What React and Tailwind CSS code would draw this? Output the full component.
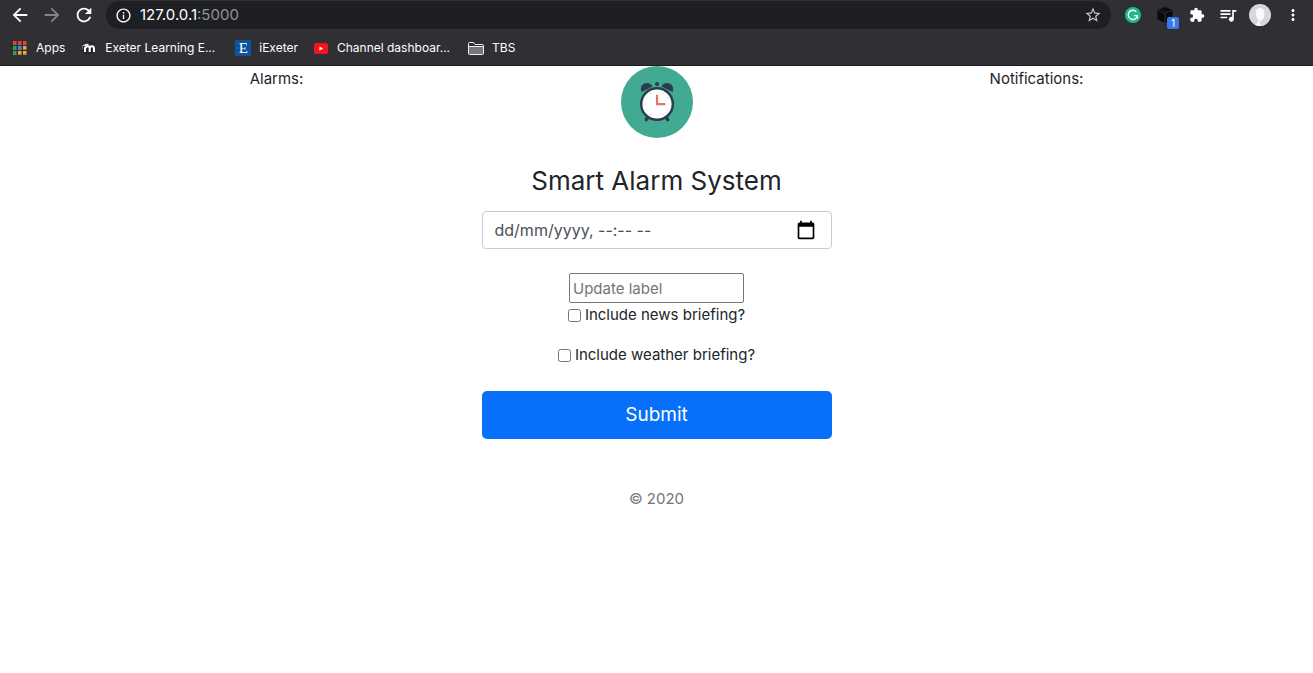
import React from "react";
import {
  MdArrowBack,
  MdArrowForward,
  MdRefresh,
  MdInfoOutline,
  MdStarOutline,
  MdExtension,
  MdQueueMusic,
  MdMoreVert,
} from "react-icons/md";

const APP_DOTS = [
  "#f03e36", "#f03e36", "#f03e36",
  "#2f9e55", "#3b8bea", "#f5a623",
  "#2f9e55", "#f5a623", "#f5a623",
];

function AppsIcon() {
  return (
    <svg viewBox="0 0 14 14" className="size-[14px]" aria-hidden="true">
      {APP_DOTS.map((c, i) => (
        <g key={i}>
          <rect x={(i % 3) * 5} y={Math.floor(i / 3) * 5} width="3.5" height="3.5" fill={c} />
          <rect x={(i % 3) * 5} y={Math.floor(i / 3) * 5 + 3} width="3.5" height="1" fill="#8b8b8e" opacity=".6" />
        </g>
      ))}
    </svg>
  );
}

function MoodleIcon() {
  return (
    <svg viewBox="0 0 16 16" className="size-4" fill="none" aria-hidden="true">
      <circle cx="7.5" cy="8" r="7" fill="#27272a" />
      <path d="M4 12V7.2M8.7 12V8.6Q8.7 6.2 6.8 6.2T4.6 8M8.7 8.6Q8.9 6.2 10.9 6.2T13 8.6V12" stroke="#fff" strokeWidth="2" />
      <path d="M1.2 5.6 6 3.4 8.4 4.8 4.2 6.2z" fill="#e8e8e8" />
      <path d="M1.5 5.8v3" stroke="#aaa" strokeWidth=".6" />
    </svg>
  );
}

function YouTubeIcon() {
  return (
    <svg viewBox="0 0 14 11" className="w-[14px] h-[11px]" aria-hidden="true">
      <rect width="14" height="11" rx="2.6" fill="#f8131b" />
      <path d="M5.4 3.4v4.2L9.2 5.5z" fill="#fff" />
    </svg>
  );
}

function FolderIcon() {
  return (
    <svg viewBox="0 0 16 13" className="w-4 h-[13px]" aria-hidden="true">
      <path d="M.5 1.5Q.5.5 1.5.5H5.6L7 2.5H14.5Q15.5 2.5 15.5 3.5V11.5Q15.5 12.5 14.5 12.5H1.5Q.5 12.5.5 11.5z" fill="#302f34" stroke="#f1f1f1" />
      <path d="M1 5H15V12H1z" fill="#77777a" />
      <path d="M.5 4.5H15.5" stroke="#f1f1f1" />
    </svg>
  );
}

function GrammarlyIcon() {
  return (
    <svg viewBox="0 0 16 16" className="size-4" fill="none" aria-hidden="true">
      <circle cx="8" cy="8" r="8" fill="#1fb892" />
      <path d="M11.3 4.8A4.6 4.6 0 1 0 12.4 8.6H9.2M12.4 8.6V11.4" stroke="#fff" strokeWidth="1.3" />
    </svg>
  );
}

function CubeIcon() {
  return (
    <svg viewBox="0 0 16 16" className="size-4" aria-hidden="true">
      <path d="M8 0 15.5 3V12.5L8 16 .5 12.5V3z" fill="#09090a" />
      <path d="M.8 3.3 8 6.3l7.2-3M8 6.3V15.6" fill="none" stroke="#39393d" strokeWidth=".8" />
      <path d="M4.2 2 11 5" stroke="#2c2c2f" strokeWidth=".6" />
    </svg>
  );
}

function AvatarIcon() {
  return (
    <svg viewBox="0 0 22 22" className="size-[22px]" aria-hidden="true">
      <circle cx="11" cy="11" r="11" fill="#d8d7d7" />
      <path d="M11 4C7.8 4 6.6 6.7 6.8 10c.1 3 1.4 5 2.6 6L9 18.6 6 21Q11 23 15.4 21L13 18.8V16c1.4-1 2.4-3.2 2.5-6C15.6 6.7 14.2 4 11 4z" fill="#f8fbfd" />
      <path d="M13 16v2.8L15 20.7 11.5 21.8 10.8 17.5z" fill="#c9dbe4" />
    </svg>
  );
}

function CalendarIcon() {
  return (
    <svg viewBox="0 0 24 24" className="size-5" aria-hidden="true">
      <path d="M20 3h-1V1h-2v2H7V1H5v2H4c-1.1 0-2 .9-2 2v16c0 1.1.9 2 2 2h16c1.1 0 2-.9 2-2V5c0-1.1-.9-2-2-2zm0 18H4V8h16v13z" fill="#000" />
    </svg>
  );
}

function AlarmLogo() {
  const ticks = Array.from({ length: 12 }, (_, i) => i * 30);
  return (
    <svg viewBox="0 0 72 72" className="size-[72px]" role="img" aria-label="Alarm clock">
      <circle cx="36" cy="36" r="36" fill="#42aa92" />
      <path d="M28 50 25.3 53.5M44 50l2.7 3.5" stroke="#2b3d4d" strokeWidth="3.6" strokeLinecap="round" />
      <g fill="#2b3d4d">
        <path d="M20.5 26C18.5 21 21.5 17 26 17c2.6 0 4.6 1.4 5.5 3.4z" />
        <path d="M51.5 26C53.5 21 50.5 17 46 17c-2.6 0-4.6 1.4-5.5 3.4z" />
        <circle cx="36" cy="18" r="2" />
      </g>
      <circle cx="36" cy="38" r="15.8" fill="#fff" stroke="#2b3d4d" strokeWidth="2.4" />
      {ticks.map((a) => (
        <path key={a} d="M36 25.5v1" stroke="#a8b0b6" strokeWidth=".7" transform={`rotate(${a} 36 38)`} />
      ))}
      <path d="M36 29.5V38.2H43.5" fill="none" stroke="#e57560" strokeWidth="2.2" strokeLinecap="round" />
    </svg>
  );
}

function Bookmark({ icon, children, className }) {
  return (
    <a href="#" className={`flex items-center whitespace-nowrap ${className}`}>
      {icon}
      {children}
    </a>
  );
}

function BrowserBar() {
  return (
    <header className="bg-[#302f34] border-b border-[#1c1b1f] text-white">
      <div className="flex items-center h-[30px] pl-[9px] pr-[11px]">
        <button type="button" aria-label="Back" className="mr-[10px]"><MdArrowBack className="size-[22px]" /></button>
        <button type="button" aria-label="Forward" className="mr-[10px] text-[#858588]"><MdArrowForward className="size-[22px]" /></button>
        <button type="button" aria-label="Reload" className="mr-[11px]"><MdRefresh className="size-[22px]" /></button>
        <div className="flex flex-1 items-center h-7 rounded-full bg-[#1e1f22] pl-[9px] pr-[9px]">
          <MdInfoOutline className="size-[17px] mr-2" />
          <span className="text-[15px] leading-5">127.0.0.1<span className="text-[#929296]">:5000</span></span>
          <button type="button" aria-label="Bookmark this page" className="ml-auto text-[#c9c9cc]"><MdStarOutline className="size-[18px]" /></button>
        </div>
        <div className="flex items-center ml-[14px]">
          <button type="button" aria-label="Grammarly"><GrammarlyIcon /></button>
          <button type="button" aria-label="Cube extension, 1 item" className="relative ml-4">
            <CubeIcon />
            <span className="absolute left-[10px] top-[10px] w-3 h-3 rounded-[2px] bg-[#3b78e7] text-[10px] leading-3 text-center">1</span>
          </button>
          <button type="button" aria-label="Extensions" className="ml-4"><MdExtension className="size-4" /></button>
          <button type="button" aria-label="Media controls" className="ml-[13px]"><MdQueueMusic className="size-5" /></button>
          <button type="button" aria-label="Profile" className="ml-[11px]"><AvatarIcon /></button>
          <button type="button" aria-label="Menu" className="ml-[13px]"><MdMoreVert className="size-[18px]" /></button>
        </div>
      </div>
      <nav aria-label="Bookmarks" className="flex items-center h-[35px] pt-px pl-[13px] text-[12px] leading-4">
        <Bookmark className="gap-[9px] mr-4" icon={<AppsIcon />}>Apps</Bookmark>
        <Bookmark className="gap-2 mr-5" icon={<MoodleIcon />}>Exeter Learning E...</Bookmark>
        <Bookmark
          className="gap-2 mr-4"
          icon={<span className="size-4 bg-[#0b539c] font-['Liberation_Serif',serif] text-[15px] leading-4 text-center">E</span>}
        >
          iExeter
        </Bookmark>
        <Bookmark className="gap-[9px] mr-[18px]" icon={<YouTubeIcon />}>Channel dashboar...</Bookmark>
        <Bookmark className="gap-2" icon={<FolderIcon />}>TBS</Bookmark>
      </nav>
    </header>
  );
}

export default function App() {
  return (
    <div className="min-h-screen bg-white text-[#212529] font-['Inter','Liberation_Sans',sans-serif]">
      <BrowserBar />
      <main className="mx-auto grid max-w-[1140px] grid-cols-3 text-[15px] leading-6 text-center">
        <section className="px-[15px] pt-px">
          <h2>Alarms:</h2>
        </section>
        <section className="px-[15px]">
          <form onSubmit={(e) => e.preventDefault()} className="flex flex-col items-center">
            <AlarmLogo />
            <h1 className="mt-6 mb-3 text-[26px] leading-[37px]">Smart Alarm System</h1>
            <div className="flex w-full items-center h-[38px] rounded border border-[#c8cdd2] pl-3 pr-[15px]">
              <input
                type="text"
                aria-label="Alarm date and time"
                placeholder="dd/mm/yyyy, --:-- --"
                className="min-w-0 flex-1 text-[16px] outline-none placeholder:text-[#495057]"
              />
              <button type="button" aria-label="Open calendar"><CalendarIcon /></button>
            </div>
            <input
              type="text"
              aria-label="Update label"
              placeholder="Update label"
              className="mt-6 w-[175px] h-[30px] rounded-[2px] border border-[#767676] px-[3px] placeholder:text-[#757575]"
            />
            <label className="flex items-center gap-1">
              <input type="checkbox" className="size-[13px]" />
              Include news briefing?
            </label>
            <label className="mt-4 flex items-center gap-1">
              <input type="checkbox" className="size-[13px]" />
              Include weather briefing?
            </label>
            <button type="submit" className="mt-6 h-12 w-full rounded-[5px] bg-[#0670fb] text-[19px] leading-7 text-white">
              Submit
            </button>
            <p className="mt-12 text-[#6c757d]">© 2020</p>
          </form>
        </section>
        <section className="px-[15px] pt-px">
          <h2>Notifications:</h2>
        </section>
      </main>
    </div>
  );
}
